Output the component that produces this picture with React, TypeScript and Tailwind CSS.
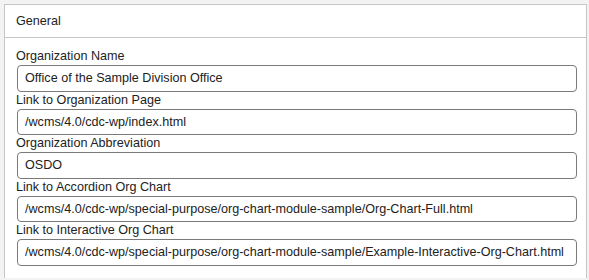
const fields = [
  { label: "Organization Name", value: "Office of the Sample Division Office" },
  { label: "Link to Organization Page", value: "/wcms/4.0/cdc-wp/index.html" },
  { label: "Organization Abbreviation", value: "OSDO" },
  {
    label: "Link to Accordion Org Chart",
    value: "/wcms/4.0/cdc-wp/special-purpose/org-chart-module-sample/Org-Chart-Full.html",
  },
  {
    label: "Link to Interactive Org Chart",
    value: "/wcms/4.0/cdc-wp/special-purpose/org-chart-module-sample/Example-Interactive-Org-Chart.html",
  },
];

export default function App() {
  return (
    <div
      className="h-[280px] w-[589px] overflow-hidden bg-[#f3f3f3] pt-[4px] pl-[4px] pr-[2px] text-[#222]"
      style={{ fontFamily: '"Liberation Sans", Arial, sans-serif' }}
    >
      <div className="border-x border-t border-[#c6c6c6] bg-white">
        {/* Panel header */}
        <div className="flex h-[33px] items-center border-b border-[#c6c6c6] pl-[11px] text-[12.6px]">
          General
        </div>

        {/* Form fields */}
        <div className="flex flex-col pt-[10px] pb-[12px] pl-[11px] pr-[9px]">
          {fields.map((f) => (
            <div key={f.label} className="flex flex-col">
              <label className="h-[17px] text-[12.6px] leading-[17px]">{f.label}</label>
              <input
                readOnly
                value={f.value}
                className="ml-[1px] h-[26.5px] rounded-[4px] border border-[#7a7a7a] bg-white px-[7px] text-[12.6px] text-[#222] outline-none"
                style={{ fontFamily: '"Liberation Sans", Arial, sans-serif' }}
              />
            </div>
          ))}
        </div>
      </div>
    </div>
  );
}
